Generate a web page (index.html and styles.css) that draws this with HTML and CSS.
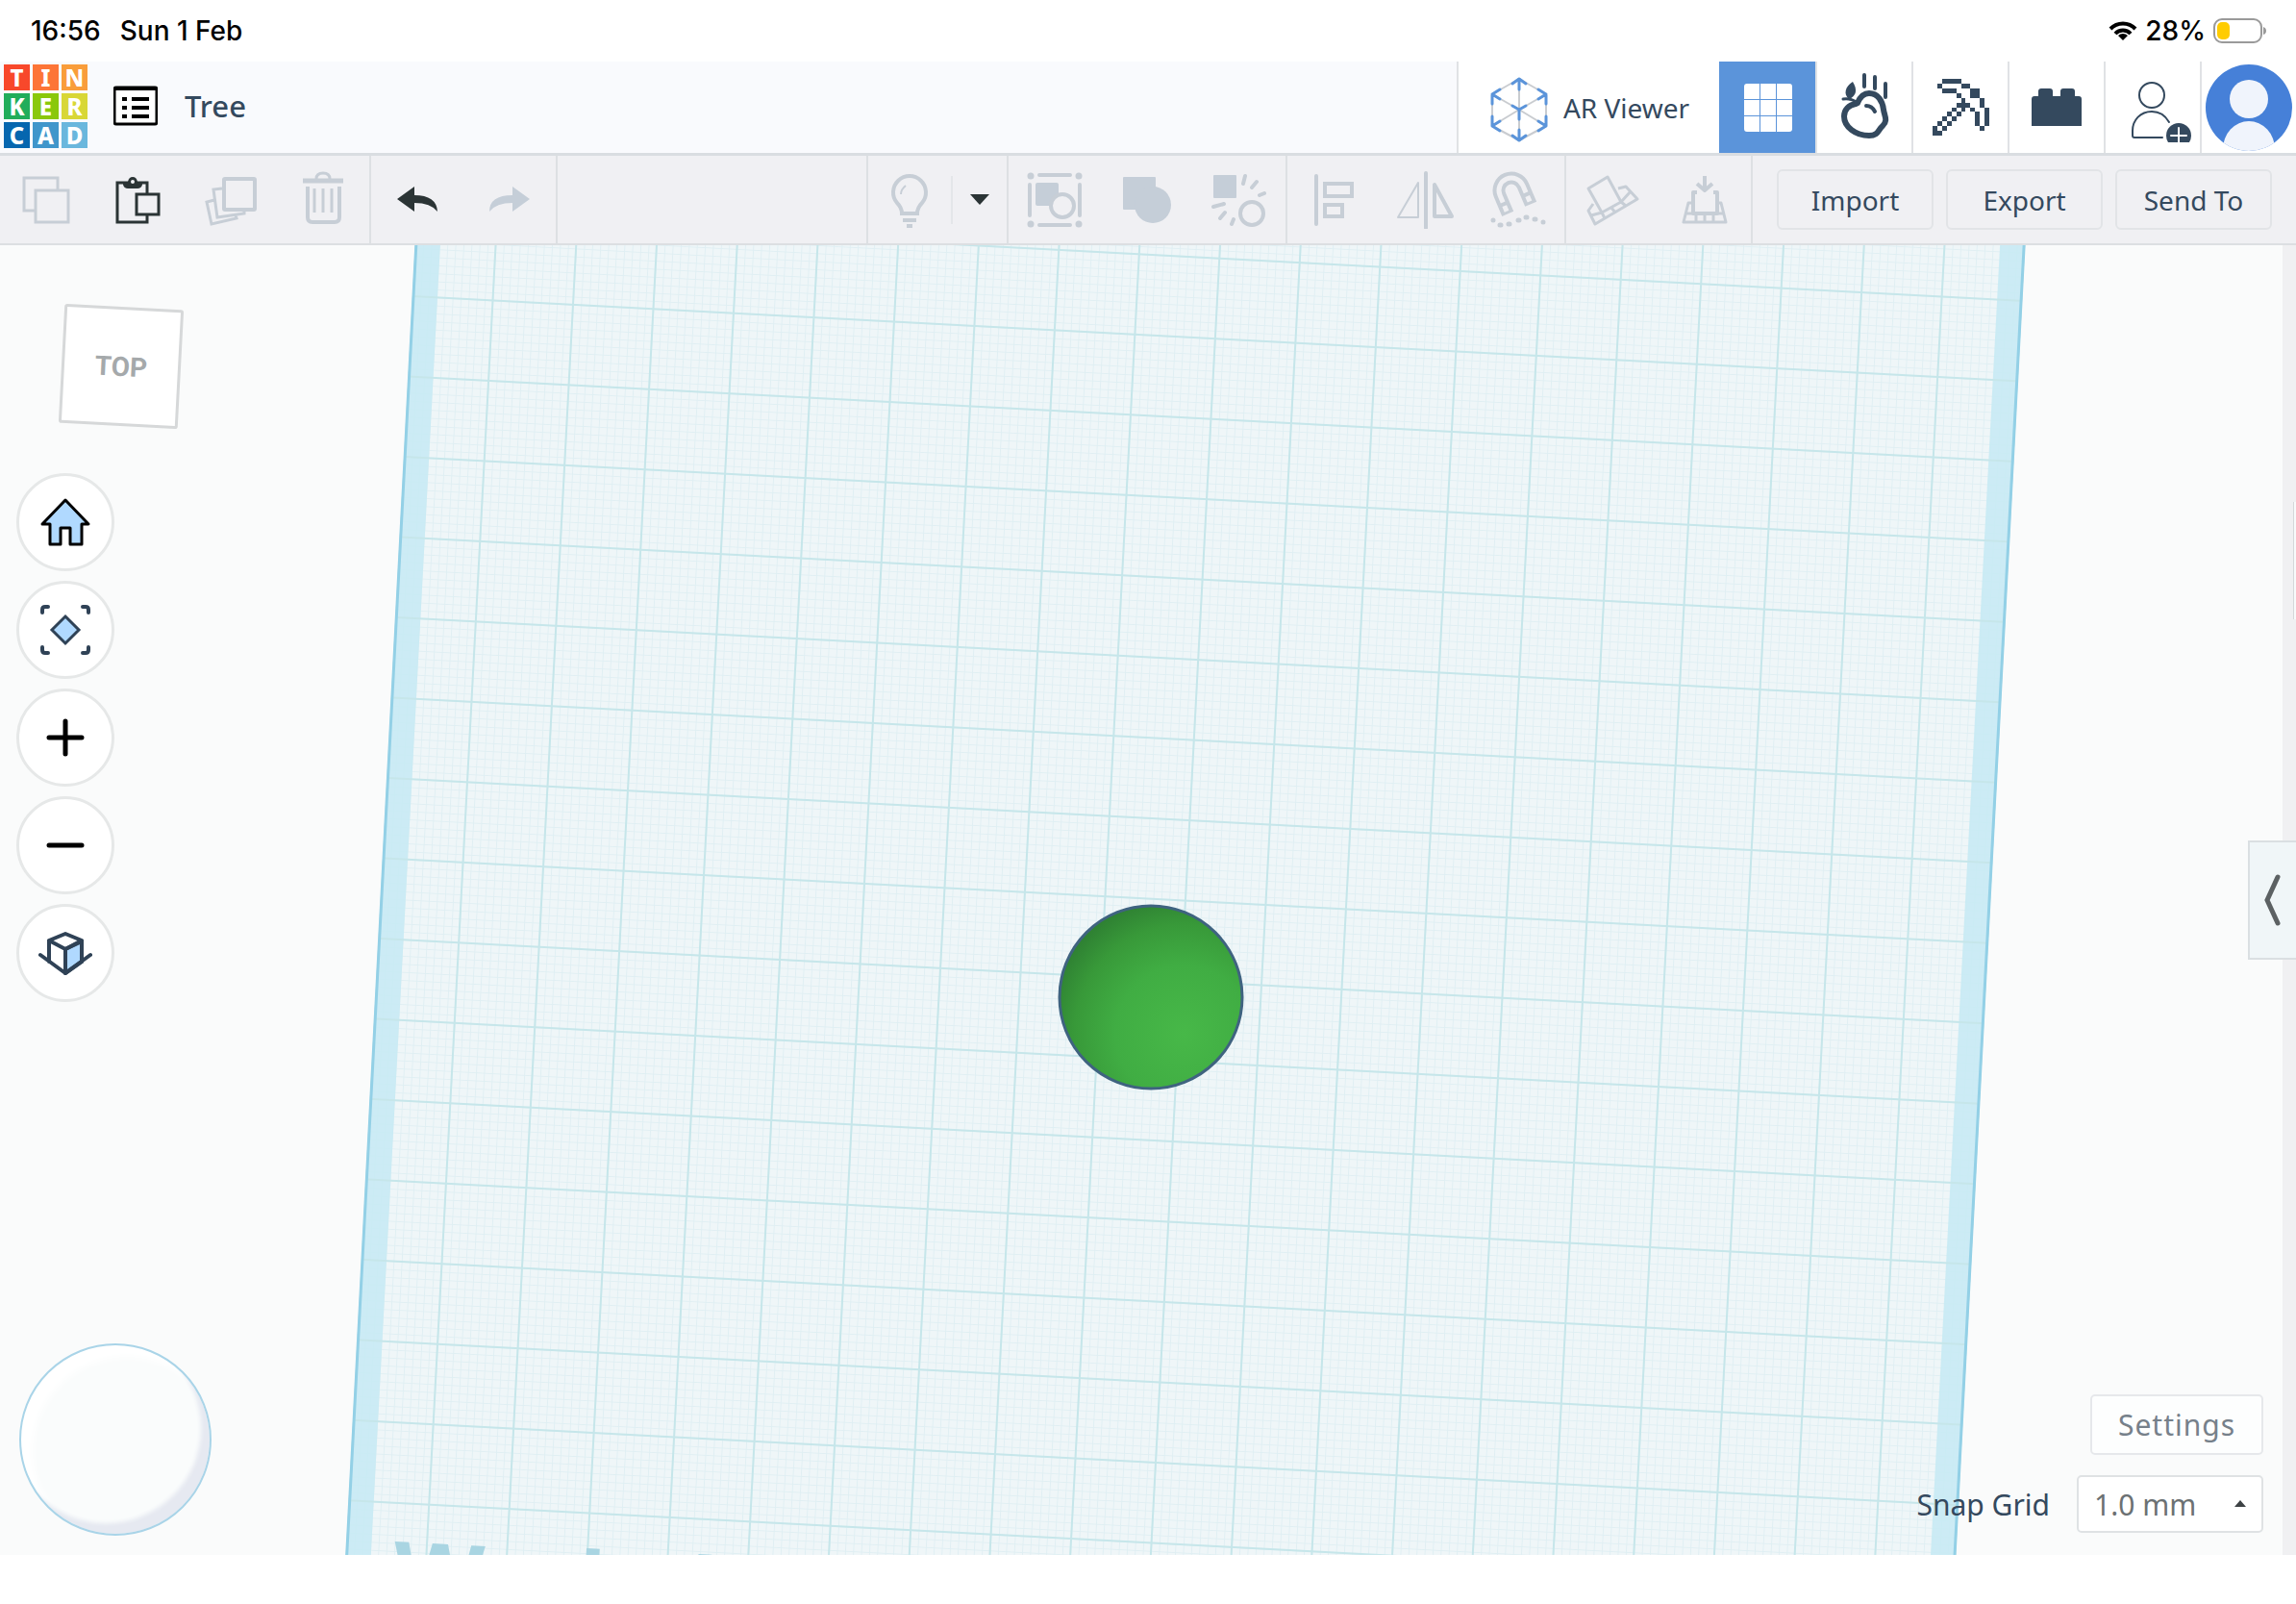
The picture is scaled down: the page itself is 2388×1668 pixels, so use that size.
FILE: index.html
```
<!DOCTYPE html>
<html lang="en">
<head>
    <meta charset="UTF-8">
    <meta name="viewport" content="width=device-width, initial-scale=1.0">
    <title>Tree - Tinkercad</title>
    <link rel="stylesheet" href="styles.css">
</head>
<body>
    <!-- Device status bar -->
    <div class="status-bar">
        <span class="status-time">16:56</span>
        <span>Sun 1 Feb</span>
        <div class="status-right">
            <svg width="30" height="22" viewBox="0 0 30 22" fill="none" stroke="#000" stroke-width="4">
                <path d="M2 9a18 18 0 0 1 26 0"/>
                <path d="M7 14a11 11 0 0 1 16 0"/>
                <path d="M15 21l-5-5a7 7 0 0 1 10 0z" fill="#000" stroke="none"/>
            </svg>
            <span>28%</span>
            <svg width="56" height="26" viewBox="0 0 56 26">
                <rect x="1" y="1" width="49" height="24" rx="8" fill="none" stroke="#9a9a9a" stroke-width="2"/>
                <rect x="4" y="4" width="13" height="18" rx="5" fill="#ffcc00"/>
                <path d="M52 9q3 1 3 4t-3 4z" fill="#9a9a9a"/>
            </svg>
        </div>
    </div>

    <header class="header">
        <a class="logo" href="#" aria-label="Tinkercad">
            <span class="t1">T</span><span class="t2">I</span><span class="t3">N</span>
            <span class="t4">K</span><span class="t5">E</span><span class="t6">R</span>
            <span class="t7">C</span><span class="t8">A</span><span class="t9">D</span>
        </a>
        <button class="list-btn" aria-label="Designs">
            <svg width="46" height="42" viewBox="0 0 46 42">
                <rect x="1" y="2" width="44" height="38" rx="2" fill="#fff" stroke="#000" stroke-width="3"/>
                <path d="M1 1h44v4H1zM9 12h5v4H9zM19 12h18v4H19zM9 21h5v4H9zM19 21h18v4H19zM9 30h5v4H9zM19 30h18v4H19z"/>
            </svg>
        </button>
        <h1 class="design-name">Tree</h1>

        <nav class="modes">
            <button class="mode ar">
                <svg width="64" height="72" viewBox="0 -2 64 72" fill="none" stroke-linecap="round" stroke-linejoin="round">
                    <path d="M32 4l28 16v33L32 68 4 53V20zM4 20l28 16 28-16M32 4v64M4 53l28-17 28 17" stroke="#c9ccd0" stroke-width="2"/>
                    <path d="M25 9l7-5 7 5M32 4v11M25 63l7 5 7-5M32 68V57M4 30V20l8-5M4 20l8 5M60 30V20l-8-5M60 20l-8 5M4 43v10l8 5M4 53l8-5M60 43v10l-8 5M60 53l-8-5M25 32l7 4 7-4M32 36v10" stroke="#5b94da" stroke-width="3"/>
                </svg>
                <span>AR Viewer</span>
            </button>
            <button class="mode active" aria-label="3D design">
                <svg width="50" height="50" viewBox="0 0 50 50" fill="#fff">
                    <path d="M3 0h13v16H0V3q0-3 3-3zM17 0h16v16H17zM34 0h13q3 0 3 3v13H34zM0 17h16v16H0zM17 17h16v16H17zM34 17h16v16H34zM0 34h16v16H3q-3 0-3-3zM17 34h16v16H17zM34 34h16v13q0 3-3 3H34z"/>
                </svg>
            </button>
            <button class="mode" aria-label="Sim lab">
                <svg width="60" height="80" viewBox="0 2 60 80" fill="none" stroke="#34495e" stroke-linecap="round">
                    <path d="M23 37c3-7 7-10 12-10 9 0 14 8 15 17 1 7 5 11-1 17-5 4-4 10-14 10C21 71 9 62 9 51c0-7 5-12 12-13z" stroke-width="6"/>
                    <path d="M32 40q6 0 9 6" stroke-width="4"/>
                    <path d="M30 8v12M41 10v12M52 17v14" stroke-width="4"/>
                    <path d="M8 33q8-1 13 3" stroke-width="3"/>
                    <path d="M18 15C10 20 8 28 14 33c8-3 9-10 4-18z" fill="#34495e" stroke="none"/>
                </svg>
            </button>
            <button class="mode" aria-label="Blocks">
                <svg width="59" height="59" viewBox="0 0 12 12" fill="#34495e" shape-rendering="crispEdges">
                    <path d="M2 0h4v1H2zM1 1h1v1H1zM6 1h2v1H6zM2 2h3v1H2zM8 2h2v2H8zM5 3h1v1H5zM10 4h1v2h-1zM6 4h1v1H6zM5 5h3v1H5zM6 6h1v1H6zM4 6h1v1H4zM8 6h1v1H8zM11 6h1v4h-1zM9 7h1v3H9zM3 7h1v1H3zM5 7h1v1H5zM2 8h1v1H2zM4 8h1v1H4zM1 9h1v1H1zM3 9h1v1H3zM0 10h1v1H0zM2 10h1v1H2zM10 10h1v1h-1zM0 11h2v1H0z"/>
                </svg>
            </button>
            <button class="mode" aria-label="Bricks">
                <svg width="52" height="40" viewBox="0 0 52 40" fill="#34495e">
                    <path d="M0 39V11q0-3 3-3h4V3q0-3 3-3h9q3 0 3 3v5h8V3q0-3 3-3h9q3 0 3 3v5h4q3 0 3 3v28z"/>
                </svg>
            </button>
            <button class="mode" aria-label="Invite people">
                <svg width="80" height="72" viewBox="0 -2 80 72" fill="none" stroke="#34495e" stroke-width="2" stroke-linecap="round">
                    <circle cx="39" cy="21" r="13"/>
                    <path d="M57 49C53 42 47 38 39 38c-12 0-20 9-20 20v5q0 2 2 2h29"/>
                    <circle cx="67" cy="63" r="13" fill="#34495e" stroke="none"/>
                    <path d="M67 55v16M59 63h16" stroke="#fff" stroke-width="2"/>
                </svg>
            </button>
            <button class="mode profile" aria-label="Profile">
                <svg width="90" height="90" viewBox="0 0 90 90">
                    <defs><clipPath id="avatar"><circle cx="45" cy="45" r="45"/></clipPath></defs>
                    <g clip-path="url(#avatar)">
                        <rect width="90" height="90" fill="#4680d8"/>
                        <circle cx="45" cy="36" r="20" fill="#f0f4fc"/>
                        <ellipse cx="45" cy="88" rx="27" ry="29" fill="#f0f4fc"/>
                    </g>
                </svg>
            </button>
        </nav>
    </header>

    <div class="toolbar">
        <div class="tool-group">
            <button class="tool" aria-label="Copy">
                <svg viewBox="0 0 60 60"><path d="M19 41H7V7h35v12M19 20h34v33H19z"/></svg>
            </button>
            <button class="tool dark" aria-label="Paste">
                <svg viewBox="0 0 60 60">
                    <path d="M26 53H8V12h31v11M39 46v7H26M28 24h23v21H28z"/>
                    <path d="M14 11h5q1-5 5-5t5 5h5v3q-1 4-5 4H19q-4 0-5-4z" fill="#2b3435" stroke="none"/>
                    <circle cx="24" cy="11" r="2" fill="#f0f0f3" stroke="none"/>
                </svg>
            </button>
            <button class="tool" aria-label="Duplicate">
                <svg viewBox="0 0 60 60">
                    <path d="M13 30l-8 2 5 23 26-6-1-3M21 18l-9 1 4 29 28-4v-3"/>
                    <rect x="23" y="8" width="32" height="32" rx="1" stroke-width="4"/>
                </svg>
            </button>
            <button class="tool" aria-label="Delete">
                <svg viewBox="0 0 60 60">
                    <path d="M23 8q0-6 7-6t7 6"/>
                    <path d="M9 10h42" stroke-width="5"/>
                    <path d="M14 16v32q0 5 5 5h23q5 0 5-5V16" stroke-width="4"/>
                    <path d="M21 18v25M30 18v25M39 18v25"/>
                </svg>
            </button>
        </div>
        <div class="tool-group">
            <button class="tool dark" aria-label="Undo">
                <svg viewBox="0 0 60 60"><path class="solid" d="M9 29l18-13v9q23 0 24 17-7-9-24-9v9z"/></svg>
            </button>
            <button class="tool" aria-label="Redo">
                <svg viewBox="0 0 60 60"><path class="solid" d="M51 29L33 16v9Q9 25 9 42q7-9 24-9v9z"/></svg>
            </button>
        </div>
        <div class="tool-group spacer"></div>
        <div class="tool-group light">
            <button class="tool bulb" aria-label="Show all">
                <svg viewBox="0 0 60 60">
                    <path d="M22 44q0-6-5-11a17 17 0 1 1 26 0q-5 5-5 11z" stroke-width="4"/>
                    <path d="M21 24q0-5 5-9" stroke-width="2"/>
                    <path d="M23 51h14M27 57h6" stroke-width="4"/>
                </svg>
            </button>
            <button class="caret" aria-label="Visibility options">
                <svg width="20" height="12" viewBox="0 0 20 12"><path d="M0 0h20L10 11z" fill="#2b3435"/></svg>
            </button>
        </div>
        <div class="tool-group">
            <button class="tool" aria-label="Select group">
                <svg viewBox="0 0 60 60">
                    <rect class="solid" x="10" y="12" width="24" height="24" rx="2"/>
                    <circle cx="38" cy="36" r="12" fill="#f0f0f3" stroke-width="4"/>
                    <path d="M14 4h32M14 56h32M4 14v32M56 14v32" stroke-width="4" stroke-linecap="round"/>
                    <path d="M5 5h0M55 5h0M5 55h0M55 55h0" stroke-width="7" stroke-linecap="round"/>
                </svg>
            </button>
            <button class="tool" aria-label="Group">
                <svg viewBox="0 0 60 60">
                    <rect class="solid" x="5" y="6" width="34" height="34" rx="1"/>
                    <circle class="solid" cx="36" cy="35" r="19"/>
                </svg>
            </button>
            <button class="tool" aria-label="Ungroup">
                <svg viewBox="0 0 60 60">
                    <rect class="solid" x="3" y="4" width="24" height="24" rx="1"/>
                    <circle cx="43" cy="44" r="12" stroke-width="4"/>
                    <path d="M36 5l-2 8M48 11l-5 6M56 23l-5 2M3 37l11-3M10 49l5-6M22 55l2-5" stroke-width="4" stroke-linecap="round"/>
                </svg>
            </button>
        </div>
        <div class="tool-group">
            <button class="tool" aria-label="Align">
                <svg viewBox="0 0 60 60">
                    <path d="M12 5v50" stroke-width="4" stroke-linecap="round"/>
                    <path d="M21 13h28v13H21zM21 35h18v12H21z" stroke-width="4"/>
                </svg>
            </button>
            <button class="tool" aria-label="Mirror">
                <svg viewBox="0 0 60 60">
                    <path d="M30 2v57" stroke-width="4" stroke-linecap="round"/>
                    <path d="M22 12v36H1z" stroke-width="2" stroke-linejoin="round"/>
                    <path d="M39 14v33h18z" stroke-width="4" stroke-linejoin="round"/>
                </svg>
            </button>
            <button class="tool" aria-label="Cruise">
                <svg viewBox="0 0 60 60">
                    <g transform="rotate(-23 23 20)">
                        <path d="M10 41V20a13 13 0 0 1 26 0v21" stroke-width="13"/>
                        <path d="M10 38v-6M10 28v-8a13 13 0 0 1 26 0v8M36 32v6" stroke="#f0f0f3" stroke-width="5"/>
                    </g>
                    <path d="M4 51h0M11 56h1M20 55h1M30 51h1M38 48h1M47 50h1M56 53h0" stroke-width="5" stroke-linecap="round"/>
                </svg>
            </button>
        </div>
        <div class="tool-group">
            <button class="tool" aria-label="Workplane">
                <svg viewBox="0 0 60 60" stroke-linejoin="round">
                    <path d="M5 18L25 6l14 26-20 11zM10 34l-5 7 7 14 44-26-12-13-8 2M8 46l11-3 20-11 10-11M19 43l3 6M29 38l4 5M39 32l5 4" stroke-width="3"/>
                </svg>
            </button>
            <button class="tool" aria-label="Drop to workplane">
                <svg viewBox="0 0 60 60" stroke-linejoin="round">
                    <path d="M30 5v14M22 13l8 7 8-7" stroke-width="4"/>
                    <path d="M22 22h-4v22h25V22h-4" stroke-width="4"/>
                    <path d="M18 33h-5L8 53h44l-5-20h-5M11 44h39M21 44v9M30 44v9M39 44v9" stroke-width="3"/>
                </svg>
            </button>
        </div>
        <div class="actions">
            <button>Import</button>
            <button>Export</button>
            <button>Send To</button>
        </div>
    </div>

    <main class="workspace">
        <svg class="scene" viewBox="0 0 2388 1362" preserveAspectRatio="xMidYMin slice">
            <defs>
                <!-- 1 mm and 10 mm grid -->
                <pattern id="minor" width="8.36" height="8.36" patternUnits="userSpaceOnUse">
                    <path d="M0 .5h8.36M.5 0v8.36" stroke="#e0eff3" stroke-width="1"/>
                </pattern>
                <pattern id="major" width="83.6" height="83.6" patternUnits="userSpaceOnUse" y="-1" x="-1">
                    <path d="M0 1h83.6M1 0v83.6" stroke="#c6e6ea" stroke-width="2"/>
                </pattern>
                <radialGradient id="ball" cx="0.68" cy="0.7" r="0.75">
                    <stop offset="0" stop-color="#47b848"/>
                    <stop offset="0.5" stop-color="#40ad43"/>
                    <stop offset="0.8" stop-color="#389939"/>
                    <stop offset="1" stop-color="#2f8233"/>
                </radialGradient>
            </defs>
            <g transform="translate(429 53) rotate(3.03)">
                <rect y="-200" width="1672" height="1800" fill="#eff6f8"/>
                <rect y="-200" width="1672" height="1800" fill="url(#minor)"/>
                <rect y="-200" width="26" height="1800" fill="#c8eaf4" fill-opacity="0.9"/>
                <rect x="1646" y="-200" width="26" height="1800" fill="#c8eaf4" fill-opacity="0.9"/>
                <rect y="-200" width="1672" height="1800" fill="url(#major)"/>
                <path d="M1-200v1800M1671-200v1800" stroke="#93d0e6" stroke-width="3"/>
                <text class="plane-label" x="50" y="1363">Workplane</text>
            </g>
            <circle cx="1197" cy="782" r="95" fill="url(#ball)" stroke="#3f6380" stroke-width="3"/>
        </svg>

        <div class="view-cube">TOP</div>

        <div class="view-controls">
            <button aria-label="Home view">
                <svg width="56" height="56" viewBox="0 0 56 56" fill="#b0d9ff" stroke="#000" stroke-width="3" stroke-linejoin="round">
                    <path d="M28 5l24 25h-7v21H33V34H23v17H12V30H4z"/>
                </svg>
            </button>
            <button aria-label="Fit view">
                <svg width="56" height="56" viewBox="0 0 56 56" fill="none" stroke="#2f4256" stroke-width="4" stroke-linecap="round">
                    <path d="M28 14l14 14-14 14-14-14z" fill="#b0d9ff" stroke-width="3"/>
                    <path d="M4 10V7q0-3 3-3h3M46 4h3q3 0 3 3v3M52 46v3q0 3-3 3h-3M10 52H7q-3 0-3-3v-3"/>
                </svg>
            </button>
            <button aria-label="Zoom in">
                <svg width="56" height="56" viewBox="0 0 56 56" stroke="#000" stroke-width="5" stroke-linecap="round"><path d="M28 11v34M11 28h34"/></svg>
            </button>
            <button aria-label="Zoom out">
                <svg width="56" height="56" viewBox="0 0 56 56" stroke="#000" stroke-width="5" stroke-linecap="round"><path d="M11 28h34"/></svg>
            </button>
            <button aria-label="Perspective view">
                <svg width="56" height="56" viewBox="0 0 56 56" fill="none" stroke="#2f4256" stroke-width="4" stroke-linecap="round" stroke-linejoin="round">
                    <path d="M28 24l17-8v21L28 49z" fill="#b0d9ff"/>
                    <path d="M11 15l17-7 17 7-17 9zM11 15v22M28 24v25M2 30l26 19 26-19M45 15v22"/>
                </svg>
            </button>
        </div>

        <div class="joystick"></div>

        <div class="side-gutter"></div>
        <div class="side-panel"></div>
        <button class="panel-tab" aria-label="Open shapes panel">
            <svg width="18" height="56" viewBox="0 0 18 56" fill="none" stroke="#5c6163" stroke-width="5" stroke-linecap="round"><path d="M14 4L3 28l11 24"/></svg>
        </button>

        <div class="grid-settings">
            <button class="settings-btn">Settings</button>
            <div class="snap-row">
                <label for="snap">Snap Grid</label>
                <div class="snap-select">
                    <select id="snap">
                        <option>0.1 mm</option>
                        <option>0.5 mm</option>
                        <option selected>1.0 mm</option>
                        <option>2.0 mm</option>
                    </select>
                    <svg width="12" height="8" viewBox="0 0 12 8"><path d="M0 7h12L6 0z" fill="#3d4245"/></svg>
                </div>
            </div>
        </div>
    </main>

    <div class="home-strip"></div>
</body>
</html>
```

FILE: styles.css
```
* {
    box-sizing: border-box;
}

body {
    margin: 0;
    min-height: 100vh;
    display: flex;
    flex-direction: column;
    background-color: #fff;
    color: #34495e;
    font-family: 'Noto Sans', 'Open Sans', sans-serif;
    overflow: hidden;
}

button,
select {
    font-family: inherit;
    color: inherit;
    background: none;
    border: none;
    margin: 0;
    padding: 0;
    cursor: pointer;
}

svg {
    display: block;
    flex: none;
}

/* Status bar */
.status-bar {
    height: 64px;
    padding: 0 30px 0 32px;
    display: flex;
    align-items: center;
    gap: 20px;
    font-family: Inter, sans-serif;
    font-size: 28px;
    font-weight: 500;
    color: #000;
}

.status-right {
    margin-left: auto;
    display: flex;
    align-items: center;
    gap: 8px;
}

/* Header */
.header {
    height: 98px;
    display: flex;
    align-items: center;
    background-color: #f9fafd;
    border-bottom: 3px solid #d9dde1;
}

.logo {
    display: grid;
    grid-template-columns: repeat(3, 27px);
    grid-auto-rows: 27px;
    gap: 3px;
    margin-left: 4px;
    color: #fff;
    font-size: 24px;
    font-weight: 800;
    line-height: 27px;
    text-align: center;
    text-decoration: none;
}

.t1 { background-color: #f8482b; }
.t2 { background-color: #fd7537; }
.t3 { background-color: #f99d3a; }
.t4 { background-color: #21ad5b; }
.t5 { background-color: #8ac80b; }
.t6 { background-color: #d8d736; }
.t7 { background-color: #0666af; }
.t8 { background-color: #4096cb; }
.t9 { background-color: #6ab7dd; }

.list-btn {
    margin-left: 27px;
}

.design-name {
    margin: 0 0 0 28px;
    font-size: 31px;
    line-height: 40px;
    padding-bottom: 3px;
    font-weight: 500;
}

.logo,
.list-btn {
    margin-bottom: 3px;
}

.modes {
    margin-left: auto;
    align-self: stretch;
    display: flex;
}

.mode {
    width: 100px;
    display: flex;
    align-items: center;
    justify-content: center;
    background-color: #fff;
    border-left: 2px solid #e0e2e5;
}

.mode.ar {
    width: 273px;
    gap: 14px;
    font-size: 28px;
    font-weight: 400;
}

.mode.active {
    background-color: #5b94da;
    border-left-color: #5b94da;
}

/* Toolbar */
.toolbar {
    height: 93px;
    display: flex;
    background-color: #f0f0f3;
    border-bottom: 2px solid #dcdfe2;
}

.tool-group {
    display: flex;
    border-right: 2px solid #dde0e3;
}

.tool-group.spacer {
    flex: 1;
}

.tool {
    width: 96px;
    display: flex;
    align-items: center;
    justify-content: center;
}

.tool svg {
    width: 60px;
    height: 60px;
    fill: none;
    stroke: #c7ced6;
    stroke-width: 3;
}

.tool .solid {
    fill: #c5ced8;
    stroke: none;
}

.tool.dark svg {
    stroke: #2b3435;
}

.tool.dark .solid {
    fill: #2b3435;
}

.tool-group.light {
    align-items: center;
}

.tool.bulb {
    width: 86px;
}

.caret {
    height: 50px;
    width: 58px;
    display: flex;
    align-items: center;
    justify-content: center;
    border-left: 2px solid #e4e6e9;
}

.actions {
    display: flex;
    align-items: center;
    gap: 13px;
    padding: 0 25px;
}

.actions button {
    width: 163px;
    height: 63px;
    border: 2px solid #e2e4e7;
    border-radius: 6px;
    font-size: 28px;
    font-weight: 400;
}

/* Workspace */
.workspace {
    position: relative;
    flex: 1;
    overflow: hidden;
    background-color: #fafbfb;
}

.scene {
    position: absolute;
    inset: 0;
    width: 100%;
    height: 100%;
}

.plane-label {
    font-family: 'Liberation Sans', sans-serif;
    font-size: 100px;
    font-weight: 700;
    fill: #a9d5e2;
}

.view-cube {
    position: absolute;
    top: 64px;
    left: 64px;
    width: 124px;
    height: 124px;
    display: flex;
    align-items: center;
    justify-content: center;
    background-color: #fff;
    border: 3px solid #d6d8d9;
    border-radius: 3px;
    color: #a5a9ab;
    font-family: Roboto, sans-serif;
    font-size: 28px;
    font-weight: 700;
    transform: rotate(3deg);
}

.view-controls {
    position: absolute;
    top: 237px;
    left: 17px;
    display: flex;
    flex-direction: column;
    gap: 10px;
}

.view-controls button {
    width: 102px;
    height: 102px;
    display: flex;
    align-items: center;
    justify-content: center;
    background-color: #fff;
    border: 3px solid #e6e8e8;
    border-radius: 50%;
}

.joystick {
    position: absolute;
    left: 20px;
    bottom: 20px;
    width: 200px;
    height: 200px;
    border: 2px solid #a9d4e8;
    border-radius: 50%;
    background-color: #fafcfc;
    box-shadow: inset -10px -12px 4px -1px #e6e9f1, inset 12px 12px 8px #fff;
}

.side-gutter {
    position: absolute;
    top: 0;
    right: 0;
    bottom: 0;
    width: 14px;
    background-color: #f0f0f2;
}

.side-panel {
    position: absolute;
    top: 267px;
    right: 0;
    width: 3px;
    height: 122px;
    background-color: #f8fafb;
    border-left: 1px solid #d5d8da;
}

.panel-tab {
    position: absolute;
    top: 619px;
    right: 0;
    width: 50px;
    height: 124px;
    display: flex;
    align-items: center;
    justify-content: center;
    background-color: #f0f6f8;
    border: 2px solid #dadfe2;
    border-right: none;
}

.grid-settings {
    position: absolute;
    right: 34px;
    bottom: 23px;
    display: flex;
    flex-direction: column;
    align-items: flex-end;
    gap: 21px;
    font-size: 30px;
    font-weight: 400;
}

.settings-btn {
    width: 180px;
    height: 63px;
    background-color: #fdfefe;
    border: 2px solid #e6e8eb;
    border-radius: 5px;
    color: #76808a;
    font-size: 30px;
    font-weight: 400;
    letter-spacing: 1px;
}

.snap-row {
    display: flex;
    align-items: center;
    gap: 28px;
}

.snap-select {
    position: relative;
}

.snap-select select {
    appearance: none;
    width: 194px;
    height: 60px;
    padding-left: 16px;
    background-color: #fff;
    border: 2px solid #dfe2e4;
    border-radius: 5px;
    color: #6c7173;
    font-size: 30px;
    font-weight: 400;
}

.snap-select svg {
    position: absolute;
    top: 26px;
    right: 18px;
    pointer-events: none;
}

.home-strip {
    height: 51px;
}
```
